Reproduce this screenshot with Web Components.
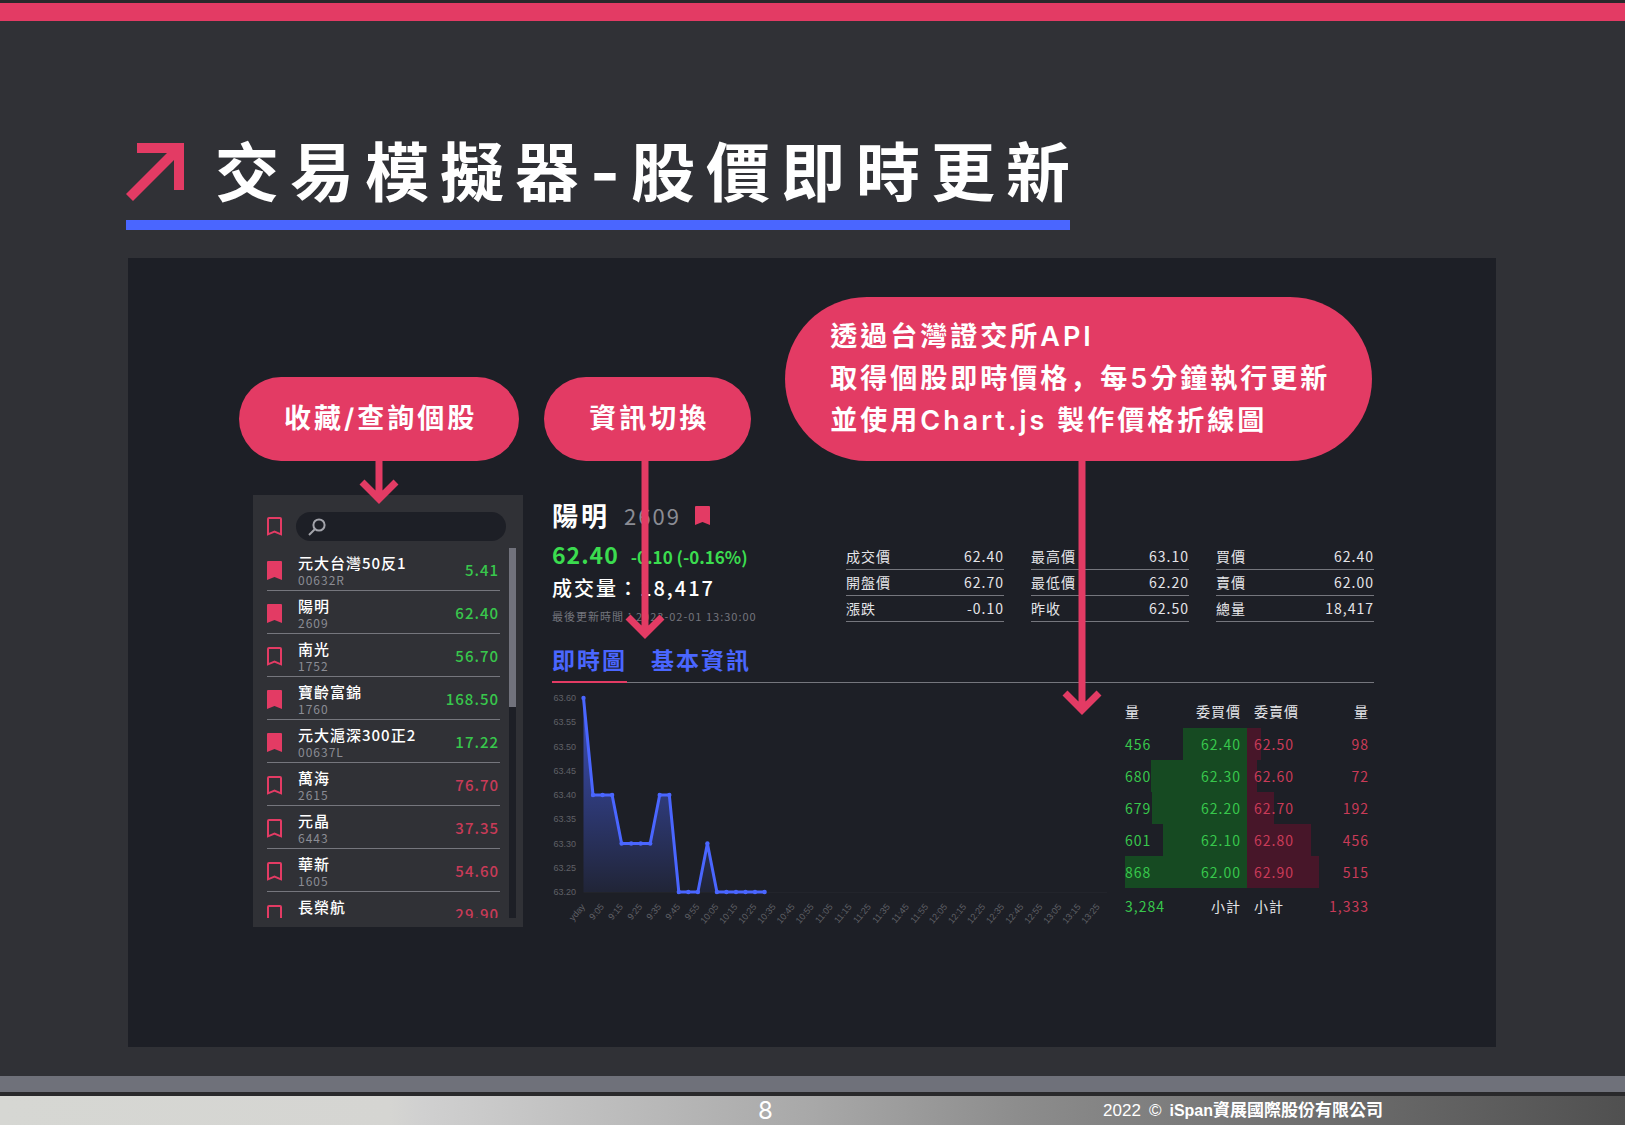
<!DOCTYPE html>
<html lang="zh-Hant">
<head>
<meta charset="utf-8">
<title>交易模擬器-股價即時更新</title>
<style>
  :root {
    --pink: #e33b64;
    --blue: #4a66ff;
    --slate: #303136;
    --ink: #1d1f26;
    --rule: #75767d;
    --muted: #8b8c94;
    --up: #3bdc4f;
    --up-soft: #38c74c;
    --down: #c93b58;
  }
  body {
    margin: 0;
    background: var(--slate);
    color: #fff;
    font-family: "Noto Sans CJK TC", "Noto Sans", sans-serif;
  }
</style>
</head>
<body>
<deck-slide>
  <slide-title slot="title">交易模擬器-股價即時更新</slide-title>
  <call-out slot="notes" reach="44">收藏/查詢個股</call-out>
  <call-out slot="notes" reach="179" tail="101px">資訊切換</call-out>
  <call-out slot="notes" reach="255" tail="297px" wide>透過台灣證交所API<br>取得個股即時價格<span lang="zh-Hans">，</span>每5分鐘執行更新<br>並使用Chart.js 製作價格折線圖</call-out>
  <watch-list slot="app"></watch-list>
  <stock-detail slot="app"></stock-detail>
  <slide-footer slot="footer" page="8"></slide-footer>
</deck-slide>

<script>
class Base extends HTMLElement {
  connectedCallback() {
    if (this.shadowRoot) return;
    this.attachShadow({ mode: 'open' }).innerHTML =
      '<style>*{box-sizing:border-box}button{font:inherit;color:inherit;letter-spacing:inherit;background:none;border:0;padding:0;margin:0;cursor:pointer}table{border-collapse:collapse;border-spacing:0}th{font-weight:inherit}' +
      this.css() + '</style>' + this.html();
  }
}

customElements.define('deck-slide', class extends Base {
  css() { return `
    :host { display: flex; flex-direction: column; min-height: 100vh; box-sizing: border-box;
      border-top: 3px solid #29292b; }
    .band { height: 18px; background: var(--pink); }
    .head { padding: 112px 126px 28px; }
    .panel { margin: 0 129px 29px 128px; padding: 39px 122px 120px 125px; background: var(--ink); }
    .notes { display: flex; align-items: flex-end; gap: 25px; margin: 0 -14px; position: relative; z-index: 2; }
    .app { display: grid; grid-template-columns: 270px minmax(0, 1fr); gap: 29px; margin-top: 34px; }
    .foot { margin-top: auto; }`; }
  html() { return `
    <div class="band"></div>
    <header class="head"><slot name="title"></slot></header>
    <main class="panel">
      <div class="notes"><slot name="notes"></slot></div>
      <div class="app"><slot name="app"></slot></div>
    </main>
    <footer class="foot"><slot name="footer"></slot></footer>`; }
});

customElements.define('slide-title', class extends Base {
  css() { return `
    :host { display: block; }
    div { display: inline-flex; align-items: flex-end; gap: 31px; padding-bottom: 7px;
      border-bottom: 10px solid var(--blue); vertical-align: top; }
    svg { width: 58px; height: 58px; flex: none; margin-bottom: 12px; }
    h1 { margin: 0 -11px 0 0; font: 700 64px/80px Inter, "Noto Sans CJK TC", sans-serif; letter-spacing: 11px; white-space: nowrap; }`; }
  html() { return `<div>
    <svg viewBox="0 0 58 58" aria-hidden="true"><path fill="var(--pink)" d="M11 0H58V47H48V17L7 58L0 51L41 10H11Z"/></svg>
    <h1><slot></slot></h1></div>`; }
});

customElements.define('call-out', class extends Base {
  css() { return `
    :host { display: block; position: relative; flex: none; padding: 21px 42px 21px 45px; border-radius: 82px;
      background: var(--pink); font-size: 27px; line-height: 42px; font-weight: 600; letter-spacing: 3px;
      font-family: Inter, "Noto Sans CJK TC", sans-serif; white-space: nowrap; }
    :host([wide]) { padding: 19px 42px 19px 45px; margin-left: 9px; }
    svg { position: absolute; top: 100%; margin-left: -20px; margin-top: -1px; }`; }
  html() {
    const h = +this.getAttribute('reach');
    return `<slot></slot>
    <svg style="left:${this.getAttribute('tail') || '50%'}" width="40" height="${h}" viewBox="0 0 40 ${h}" aria-hidden="true" fill="none" stroke="var(--pink)" stroke-width="7">
      <path d="M20 0V${h - 6}M3 ${h - 22}L20 ${h - 5}L37 ${h - 22}"/></svg>`;
  }
});

customElements.define('mark-button', class extends Base {
  css() { return `
    :host { display: block; width: 15px; height: 19px; }
    button { display: block; width: 100%; height: 100%; }
    svg { display: block; width: 15px; height: 19px; }`; }
  html() {
    const on = this.hasAttribute('on');
    return `<button aria-label="收藏" aria-pressed="${on}"><svg viewBox="0 0 15 19">${on
      ? '<path fill="var(--pink)" d="M0 1Q0 0 1 0H14Q15 0 15 1V19L7.500 16L0 19Z"/>'
      : '<path fill="none" stroke="var(--pink)" stroke-width="2" d="M1 2Q1 1 2 1H13Q14 1 14 2V17.300L7.500 14.500L1 17.300Z"/>'}</svg></button>`;
  }
});

customElements.define('watch-list', class extends Base {
  css() { return `
    :host { display: block; height: 432px; padding: 17px 7px 9px 14px; background: var(--slate); box-sizing: border-box; }
    .find { display: flex; align-items: center; gap: 14px; padding-right: 10px; }
    label { flex: 1; min-width: 0; display: flex; align-items: center; height: 29px; padding: 0 12px; gap: 8px;
      border-radius: 15px; background: var(--ink); }
    label svg { flex: none; }
    input { flex: 1; min-width: 0; border: 0; outline: 0; background: none; color: #fff; font: 15px "Noto Sans CJK TC", sans-serif; }
    .body { display: flex; justify-content: space-between; margin-top: 7px; height: 370px; }
    ul { list-style: none; margin: 0; padding: 0; width: 233px; overflow: hidden; }
    li { display: grid; grid-template-columns: 15px 1fr auto; align-items: center; column-gap: 16px;
      height: 43px; padding: 4px 2px 0 0; border-bottom: 1px solid var(--rule); letter-spacing: 1px; }
    li mark-button { margin-bottom: 2px; }
    .name { font-size: 15px; line-height: 18px; font-weight: 500; white-space: nowrap; }
    .code { font-size: 12px; line-height: 16px; color: var(--muted); }
    .price { font-size: 15px; font-weight: 500; color: var(--down); margin: 0 -1px 4px 0; }
    .price.up { color: var(--up-soft); }
    .bar { width: 7px; background: var(--ink); }
    .thumb { height: 43%; background: #71727c; }`; }
  html() {
    const rows = [
      ['元大台灣50反1', '00632R', '5.41', 1, 1], ['陽明', '2609', '62.40', 1, 1],
      ['南光', '1752', '56.70', 0, 1], ['寶齡富錦', '1760', '168.50', 1, 1],
      ['元大滬深300正2', '00637L', '17.22', 1, 1], ['萬海', '2615', '76.70', 0, 0],
      ['元晶', '6443', '37.35', 0, 0], ['華新', '1605', '54.60', 0, 0], ['長榮航', '', '29.90', 0, 0]];
    return `
    <div class="find"><mark-button></mark-button>
      <label><svg width="18" height="18" viewBox="0 0 18 18" fill="none" stroke="#a3a4ab" stroke-width="2" aria-hidden="true"><circle cx="11" cy="7" r="5.600"/><path d="M7 11L1 17"/></svg>
      <input type="text" aria-label="查詢個股"></label></div>
    <div class="body"><ul>${rows.map(([n, c, p, on, up]) => `
      <li><mark-button ${on ? 'on' : ''}></mark-button><div><div class="name">${n}</div><div class="code">${c || '&nbsp;'}</div></div><span class="price ${up ? 'up' : ''}">${p}</span></li>`).join('')}
    </ul><div class="bar"><div class="thumb"></div></div></div>`;
  }
});

customElements.define('stock-detail', class extends Base {
  css() { return `
    :host { display: block; min-width: 0; }
    .top { display: flex; justify-content: space-between; align-items: flex-end; }
    .name { display: flex; align-items: center; height: 40px; margin: 0; font-size: 26px; line-height: 38px; font-weight: 700; letter-spacing: 3px; }
    .name span { margin: 0 14px; font-size: 22px; font-weight: 400; letter-spacing: 2px; color: var(--muted); }
    .now { display: flex; align-items: baseline; gap: 12px; height: 40px; line-height: 38px; color: var(--up); font-weight: 700; font-size: 23px; letter-spacing: 1px; }
    .now small { font-size: 17px; letter-spacing: 0; }
    .vol { font-size: 20px; line-height: 26px; font-weight: 500; letter-spacing: 2px; }
    .time { font-size: 11px; line-height: 30px; letter-spacing: 1px; color: #74757d; }
    .stats { display: grid; grid-template-columns: repeat(3, 158px); gap: 27px; padding-bottom: 9px; }
    nav { display: flex; gap: 24px; padding-top: 11px; border-bottom: 1px solid var(--rule); }
    nav button { height: 40px; padding-bottom: 6px; font-size: 23px; line-height: 34px; font-weight: 700; letter-spacing: 2px; color: var(--blue); }
    nav button[aria-selected=true] { border-bottom: 2px solid var(--pink); padding-bottom: 5px; margin-bottom: -1px; height: 41px; }
    .low { display: grid; grid-template-columns: minmax(0, 1fr) 244px; gap: 18px; padding-right: 5px; align-items: start; }`; }
  html() { return `
    <div class="top">
      <section>
        <h2 class="name">陽明<span>2609</span><mark-button on></mark-button></h2>
        <div class="now">62.40<small>-0.10 (-0.16%)</small></div>
        <div class="vol">成交量：18,417</div>
        <div class="time">最後更新時間：2023-02-01 13:30:00</div>
      </section>
      <div class="stats">
        <stat-table rows="成交價 62.40|開盤價 62.70|漲跌 -0.10"></stat-table>
        <stat-table rows="最高價 63.10|最低價 62.20|昨收 62.50"></stat-table>
        <stat-table rows="買價 62.40|賣價 62.00|總量 18,417"></stat-table>
      </div>
    </div>
    <nav role="tablist"><button role="tab" aria-selected="true">即時圖</button><button role="tab" aria-selected="false">基本資訊</button></nav>
    <div class="low"><price-chart></price-chart><order-book></order-book></div>`; }
});

customElements.define('stat-table', class extends Base {
  css() { return `
    :host { display: block; }
    table { width: 100%; font-size: 14px; line-height: 25px; letter-spacing: 1px; color: #e4e4e8; }
    tr { border-bottom: 1px solid var(--rule); height: 26px; }
    th, td { padding: 0; text-align: left; }
    td { text-align: right; }`; }
  html() {
    return '<table>' + this.getAttribute('rows').split('|').map(r => {
      const [k, v] = r.split(' ');
      return `<tr><th scope="row">${k}</th><td>${v}</td></tr>`;
    }).join('') + '</table>';
  }
});

customElements.define('price-chart', class extends Base {
  css() { return `
    :host { display: block; }
    svg { display: block; width: 100%; height: auto; overflow: visible; }
    text { font-family: "Liberation Sans", sans-serif; font-size: 9px; fill: #606167; }`; }
  html() {
    const v = [63.6, 63.4, 63.4, 63.4, 63.3, 63.3, 63.3, 63.3, 63.4, 63.4, 63.2, 63.2, 63.2, 63.3, 63.2, 63.2, 63.2, 63.2, 63.2, 63.2];
    const x = i => +(31.5 + i * 9.53).toFixed(1), y = p => +(209 - (p - 63.2) * 485).toFixed(1);
    const pts = v.map((p, i) => x(i) + ' ' + y(p));
    let labels = '';
    for (let k = 0; k < 9; k++) {
      const p = 63.6 - k * 0.05;
      labels += `<text x="24" y="${y(p) + 3}" text-anchor="end">${p.toFixed(2)}</text>`;
    }
    for (let k = 0; k < 28; k++) {
      const m = 535 + k * 10;
      const t = k ? Math.floor(m / 60) + ':' + String(m % 60).padStart(2, '0') : 'yday';
      labels += `<text text-anchor="end" transform="translate(${x(k * 2) + 2} 224) rotate(-50)">${t}</text>`;
    }
    return `<svg viewBox="0 0 555 243" role="img" aria-label="即時圖">
      <defs><linearGradient id="g" x1="0" y1="15" x2="0" y2="209" gradientUnits="userSpaceOnUse"><stop offset="0" stop-color="#4a66ff" stop-opacity=".7"/><stop offset="1" stop-color="#4a66ff" stop-opacity=".08"/></linearGradient></defs>
      <path d="M31.500 209.500H555" stroke="#22242b"/>
      <path d="M${pts.join('L')}V209H31.500Z" fill="url(#g)"/>
      <path d="M${pts.join('L')}" fill="none" stroke="#4a66ff" stroke-width="3"/>
      ${v.map((p, i) => `<circle cx="${x(i)}" cy="${y(p)}" r="2.200" fill="#4a66ff"/>`).join('')}
      ${labels}</svg>`;
  }
});

customElements.define('order-book', class extends Base {
  css() { return `
    :host { display: block; margin-top: 11px; }
    table { width: 100%; table-layout: fixed; font-size: 14px; letter-spacing: 1px; color: #e4e4e8; }
    th, td { padding: 0; text-align: left; }
    thead tr { height: 34px; } tbody tr { height: 32px; } tfoot tr { height: 36px; }
    tbody tr { background: linear-gradient(to right, transparent var(--a), #164a22 var(--a), #164a22 50%, #471629 50%, #471629 var(--b), transparent var(--b)); }
    tr > :nth-child(2) { text-align: right; padding-right: 6px; }
    tr > :nth-child(3) { padding-left: 7px; }
    tr > :nth-child(4) { text-align: right; }
    .g { color: var(--up-soft); } .r { color: var(--down); }`; }
  html() {
    const rows = [[456, '62.40', '62.50', 98], [680, '62.30', '62.60', 72], [679, '62.20', '62.70', 192], [601, '62.10', '62.80', 456], [868, '62.00', '62.90', 515]];
    return `<table>
      <thead><tr><th scope="col">量</th><th scope="col">委買價</th><th scope="col">委賣價</th><th scope="col">量</th></tr></thead>
      <tbody>${rows.map(([a, b, c, d]) => `<tr style="--a:${50 - a / 868 * 50}%;--b:${50 + d / 868 * 50}%"><td class="g">${a}</td><td class="g">${b}</td><td class="r">${c}</td><td class="r">${d}</td></tr>`).join('')}</tbody>
      <tfoot><tr><td class="g">3,284</td><td>小計</td><td>小計</td><td class="r">1,333</td></tr></tfoot></table>`;
  }
});

customElements.define('slide-footer', class extends Base {
  css() { return `
    :host { display: block; border-top: 16px solid #6f717a; font-family: "Liberation Sans", "Noto Sans CJK TC", sans-serif; }
    div { display: grid; grid-template-columns: 1fr auto 1fr; align-items: center; height: 33px; border-top: 4px solid #29292b;
      background: linear-gradient(to right, #d6d7d3 0, #d5d5d2 24%, #d0d0d0 26%, #a8a8a8 50%, #8c8c8c 63%, #757575 77%, #505050 100%); }
    b { grid-column: 2; font: 24px/29px Inter, sans-serif; margin-right: 94px; }
    p { display: flex; gap: 8px; align-items: baseline; margin: 0 242px 0 0; justify-self: end; font-size: 17px; line-height: 29px; height: 29px; white-space: nowrap; }
    strong span { font-size: 16px; }`; }
  html() { return `<div><b>${this.getAttribute('page')}</b><p><span>2022</span><span>©</span><strong><span>iSpan</span>資展國際股份有限公司</strong></p></div>`; }
});
</script>
</body>
</html>
